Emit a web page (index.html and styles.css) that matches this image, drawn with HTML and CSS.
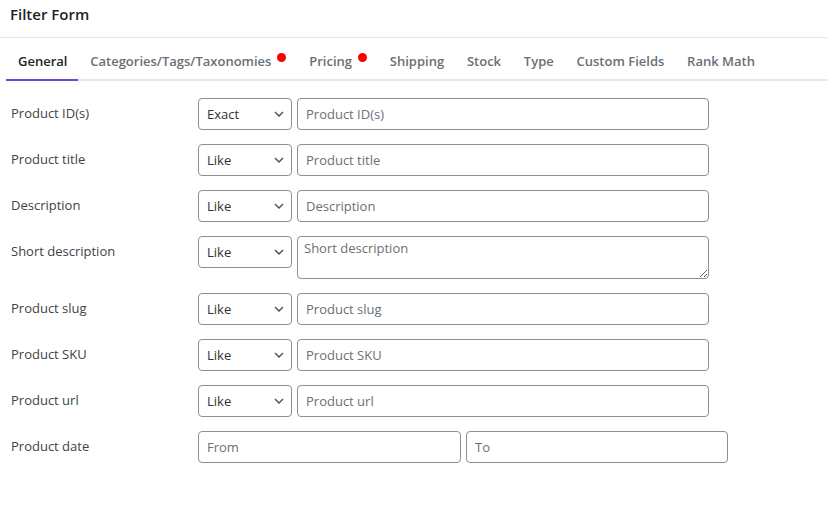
FILE: index.html
```html
<!DOCTYPE html>
<html lang="en">

<head>
    <meta charset="UTF-8">
    <meta name="viewport" content="width=device-width, initial-scale=1.0">
    <title>Filter Form</title>
    <link rel="stylesheet" href="styles.css">
</head>

<body>
    <div class="filter-header">Filter Form</div>

    <div class="tabs">
        <div class="tab active">General</div>
        <div class="tab">Categories/Tags/Taxonomies<span class="dot"></span></div>
        <div class="tab">Pricing<span class="dot"></span></div>
        <div class="tab">Shipping</div>
        <div class="tab">Stock</div>
        <div class="tab">Type</div>
        <div class="tab">Custom Fields</div>
        <div class="tab">Rank Math</div>
    </div>

    <form class="filter-form">
        <div class="form-row">
            <label>Product ID(s)</label>
            <div class="select-wrap">
                <select><option>Exact</option></select>
                <svg viewBox="0 0 10 6"><path d="M1 1l4 4 4-4" /></svg>
            </div>
            <input type="text" placeholder="Product ID(s)">
        </div>
        <div class="form-row">
            <label>Product title</label>
            <div class="select-wrap">
                <select><option>Like</option></select>
                <svg viewBox="0 0 10 6"><path d="M1 1l4 4 4-4" /></svg>
            </div>
            <input type="text" placeholder="Product title">
        </div>
        <div class="form-row">
            <label>Description</label>
            <div class="select-wrap">
                <select><option>Like</option></select>
                <svg viewBox="0 0 10 6"><path d="M1 1l4 4 4-4" /></svg>
            </div>
            <input type="text" placeholder="Description">
        </div>
        <div class="form-row">
            <label>Short description</label>
            <div class="select-wrap">
                <select><option>Like</option></select>
                <svg viewBox="0 0 10 6"><path d="M1 1l4 4 4-4" /></svg>
            </div>
            <textarea placeholder="Short description"></textarea>
        </div>
        <div class="form-row">
            <label>Product slug</label>
            <div class="select-wrap">
                <select><option>Like</option></select>
                <svg viewBox="0 0 10 6"><path d="M1 1l4 4 4-4" /></svg>
            </div>
            <input type="text" placeholder="Product slug">
        </div>
        <div class="form-row">
            <label>Product SKU</label>
            <div class="select-wrap">
                <select><option>Like</option></select>
                <svg viewBox="0 0 10 6"><path d="M1 1l4 4 4-4" /></svg>
            </div>
            <input type="text" placeholder="Product SKU">
        </div>
        <div class="form-row">
            <label>Product url</label>
            <div class="select-wrap">
                <select><option>Like</option></select>
                <svg viewBox="0 0 10 6"><path d="M1 1l4 4 4-4" /></svg>
            </div>
            <input type="text" placeholder="Product url">
        </div>
        <div class="form-row">
            <label>Product date</label>
            <input type="text" class="date" placeholder="From">
            <input type="text" class="date to" placeholder="To">
        </div>
    </form>
</body>

</html>
```

FILE: styles.css
```css
body {
    font-family: "Open Sans", sans-serif;
    margin: 0;
    padding: 0;
    background-color: white;
    color: #2c3338;
}

.filter-header {
    height: 38px;
    line-height: 28px;
    padding: 0 10px;
    font-size: 15px;
    font-weight: 600;
    color: #1d2327;
    border-bottom: 1px solid #e6e6e6;
    box-sizing: border-box;
}

.tabs {
    display: flex;
    margin-left: 6px;
    border-bottom: 2px solid #e6e6e6;
    height: 43px;
    box-sizing: border-box;
}

.tab {
    display: flex;
    align-items: center;
    padding: 4px 10.8px 0 12px;
    font-size: 13px;
    font-weight: 600;
    color: #6b6f76;
    margin-bottom: -2px;
    border-bottom: 2px solid transparent;
    white-space: nowrap;
}

.tab.active {
    color: #1d2327;
    border-bottom-color: #6e45d6;
}

.dot {
    width: 9px;
    height: 9px;
    border-radius: 50%;
    background: #ff0000;
    margin: 0 0 6px 6px;
}

.filter-form {
    padding: 17px 11px;
    display: flex;
    flex-direction: column;
    gap: 14px;
}

.form-row {
    display: flex;
    align-items: flex-start;
    gap: 5px;
}

.form-row label {
    width: 182px;
    line-height: 30px;
    font-size: 13px;
    color: #3c434a;
}

.select-wrap {
    position: relative;
    width: 94px;
    height: 32px;
}

select {
    appearance: none;
    width: 100%;
    height: 100%;
    border: 1px solid #8c8f94;
    border-radius: 4px;
    background: white;
    padding: 0 8px;
    font-family: "Open Sans", sans-serif;
    font-size: 13px;
    color: #2c3338;
}

.select-wrap svg {
    position: absolute;
    right: 8px;
    top: 13px;
    width: 10px;
    height: 6px;
    fill: none;
    stroke: #50575e;
    stroke-width: 1.5;
    pointer-events: none;
}

input,
textarea {
    width: 412px;
    height: 32px;
    border: 1px solid #8c8f94;
    border-radius: 4px;
    padding: 0 8px;
    font-family: "Open Sans", sans-serif;
    font-size: 13px;
    color: #2c3338;
    box-sizing: border-box;
}

textarea {
    height: 43px;
    padding: 2px 6px;
    resize: vertical;
}

input.date {
    width: 263px;
}

input.date.to {
    width: 262px;
}

input::placeholder,
textarea::placeholder {
    color: #6b6f76;
}
```
